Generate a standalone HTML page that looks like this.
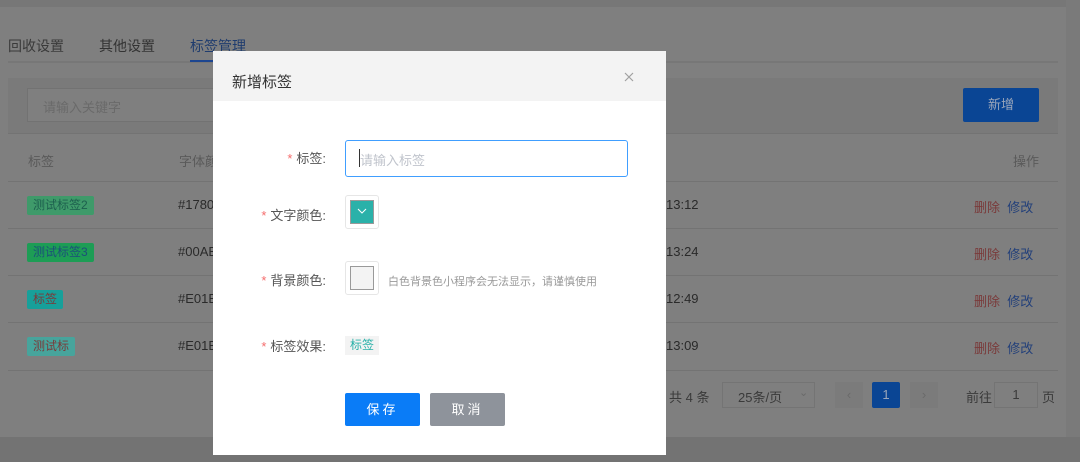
<!DOCTYPE html>
<html><head><meta charset="utf-8"><style>
*{margin:0;padding:0;box-sizing:border-box}
body{width:1080px;height:462px;position:relative;overflow:hidden;background:#7f7f7f;font-family:"Liberation Sans","Noto Sans CJK SC",sans-serif;font-size:13px;color:#333}
.a{position:absolute}
.t{position:absolute;white-space:nowrap}
.row{position:absolute;left:8px;width:1050px;height:1px;background:#737373}
.tag{position:absolute;height:19px;line-height:19px;padding:0 6px;border-radius:2px;font-size:12px}
.del{color:#7a3a3a}.mod{color:#23407a}
.lbl{position:absolute;right:340px;font-size:13px;color:#555}
.lbl b{color:#f56c6c;font-weight:normal;margin-right:4px}
</style></head><body>
<div class="a" style="left:0;top:0;width:1080px;height:7px;background:#777"></div>
<div class="a" style="left:1066px;top:0;width:14px;height:462px;background:#7a7a7a"></div>
<div class="a" style="left:0;top:437px;width:1080px;height:25px;background:#737373"></div>
<div class="t" style="left:8px;top:36px;font-size:14px;color:#3a3a3a">回收设置</div>
<div class="t" style="left:99px;top:36px;font-size:14px;color:#333">其他设置</div>
<div class="t" style="left:190px;top:36px;font-size:14px;color:#1f3c6e">标签管理</div>
<div class="row" style="top:61px;height:2px;background:#777"></div>
<div class="a" style="left:190px;top:60px;width:52px;height:2px;background:#1d4690"></div>
<div class="a" style="left:8px;top:78px;width:1050px;height:55px;background:#7a7a7a"></div>
<div class="a" style="left:27px;top:88px;width:200px;height:34px;border:1px solid #727272;background:#7f7f7f"></div>
<div class="t" style="left:43px;top:97px;color:#6a6a6a">请输入关键字</div>
<div class="a" style="left:963px;top:88px;width:76px;height:34px;background:#0a4594;border-radius:2px;color:#9aa6ba;text-align:center;line-height:34px">新增</div>
<div class="row" style="top:133px"></div>
<div class="t" style="left:28px;top:151px;color:#5a5a5a">标签</div>
<div class="t" style="left:179px;top:151px;color:#5a5a5a">字体颜色</div>
<div class="t" style="left:1013px;top:151px;color:#5a5a5a">操作</div>
<div class="row" style="top:181px"></div>
<div class="row" style="top:228px"></div>
<div class="row" style="top:275px"></div>
<div class="row" style="top:322px"></div>
<div class="row" style="top:370px"></div>
<div class="tag" style="left:27px;top:196px;background:#3f9a6a;color:#1d5f4e">测试标签2</div>
<div class="tag" style="left:27px;top:243px;background:#1d9d55;color:#1c4f7a">测试标签3</div>
<div class="tag" style="left:27px;top:290px;background:#17a09a;color:#7a3a3a">标签</div>
<div class="tag" style="left:27px;top:337px;background:#47a49c;color:#7a3a3a">测试标</div>
<div class="t" style="left:178px;top:197px;color:#2a2a2a">#1780</div>
<div class="t" style="left:178px;top:244px;color:#2a2a2a">#00AE</div>
<div class="t" style="left:178px;top:291px;color:#2a2a2a">#E01E</div>
<div class="t" style="left:178px;top:338px;color:#2a2a2a">#E01E</div>
<div class="t" style="left:666px;top:197px;color:#2a2a2a">13:12</div>
<div class="t" style="left:666px;top:244px;color:#2a2a2a">13:24</div>
<div class="t" style="left:666px;top:291px;color:#2a2a2a">12:49</div>
<div class="t" style="left:666px;top:338px;color:#2a2a2a">13:09</div>
<div class="t" style="left:974px;top:197px"><span class="del">删除</span>&nbsp;&nbsp;<span class="mod">修改</span></div>
<div class="t" style="left:974px;top:244px"><span class="del">删除</span>&nbsp;&nbsp;<span class="mod">修改</span></div>
<div class="t" style="left:974px;top:291px"><span class="del">删除</span>&nbsp;&nbsp;<span class="mod">修改</span></div>
<div class="t" style="left:974px;top:338px"><span class="del">删除</span>&nbsp;&nbsp;<span class="mod">修改</span></div>
<div class="t" style="left:669px;top:387px;color:#3a3a3a">共 4 条</div>
<div class="a" style="left:722px;top:382px;width:93px;height:26px;border:1px solid #747474"></div>
<div class="t" style="left:738px;top:387px;color:#3a3a3a">25条/页</div>
<div class="t" style="left:799px;top:386px;color:#6a6a6a;font-size:11px">⌄</div>
<div class="a" style="left:835px;top:382px;width:28px;height:26px;background:#7b7b7b;color:#6a6a6a;text-align:center;line-height:26px">‹</div>
<div class="a" style="left:872px;top:382px;width:28px;height:26px;background:#0a4594;color:#9aa6ba;text-align:center;line-height:26px;border-radius:2px">1</div>
<div class="a" style="left:910px;top:382px;width:28px;height:26px;background:#7b7b7b;color:#6a6a6a;text-align:center;line-height:26px">›</div>
<div class="t" style="left:966px;top:387px;color:#3a3a3a">前往</div>
<div class="a" style="left:994px;top:382px;width:44px;height:26px;border:1px solid #747474;color:#3a3a3a;text-align:center;line-height:24px">1</div>
<div class="t" style="left:1042px;top:387px;color:#3a3a3a">页</div>
<div class="a" style="left:213px;top:51px;width:453px;height:404px;background:#fff">
 <div class="a" style="left:0;top:0;width:453px;height:50px;background:#f3f3f3"></div>
 <div class="t" style="left:19px;top:20px;font-size:15px;color:#333">新增标签</div>
 <svg class="a" style="left:411px;top:21px" width="10" height="10" viewBox="0 0 10 10"><path d="M1 1L9 9M9 1L1 9" stroke="#a0a0a0" stroke-width="1.2"/></svg>
 <div class="lbl" style="top:97px"><b>*</b>标签:</div>
 <div class="a" style="left:132px;top:89px;width:283px;height:37px;border:1px solid #409eff;border-radius:3px"></div>
 <div class="a" style="left:146px;top:98px;width:1px;height:18px;background:#333"></div>
 <div class="t" style="left:147px;top:99px;color:#c0c4cc">请输入标签</div>
 <div class="lbl" style="top:154px"><b>*</b>文字颜色:</div>
 <div class="a" style="left:132px;top:144px;width:34px;height:34px;border:1px solid #e6e6e6;border-radius:3px"></div>
 <div class="a" style="left:137px;top:149px;width:24px;height:24px;background:#2ab1a9;border:1px solid #999"></div>
 <svg class="a" style="left:144px;top:157px" width="10" height="6"><path d="M1 1L5 5L9 1" stroke="#fff" fill="none"/></svg>
 <div class="lbl" style="top:219px"><b>*</b>背景颜色:</div>
 <div class="a" style="left:132px;top:210px;width:34px;height:34px;border:1px solid #e6e6e6;border-radius:3px"></div>
 <div class="a" style="left:137px;top:215px;width:24px;height:24px;background:#f3f3f3;border:1px solid #999"></div>
 <div class="t" style="left:175px;top:222px;font-size:11px;color:#999">白色背景色小程序会无法显示，请谨慎使用</div>
 <div class="lbl" style="top:285px"><b>*</b>标签效果:</div>
 <div class="a" style="left:132px;top:285px;width:34px;height:19px;background:#f3f3f3;color:#2ab1a9;font-size:12px;text-align:center;line-height:19px">标签</div>
 <div class="a" style="left:132px;top:342px;width:75px;height:33px;background:#0a7cf7;border-radius:2px;color:#fff;text-align:center;line-height:33px;letter-spacing:3px">保存</div>
 <div class="a" style="left:217px;top:342px;width:75px;height:33px;background:#8e939b;border-radius:2px;color:#fff;text-align:center;line-height:33px;letter-spacing:3px">取消</div>
</div>
</body></html>
